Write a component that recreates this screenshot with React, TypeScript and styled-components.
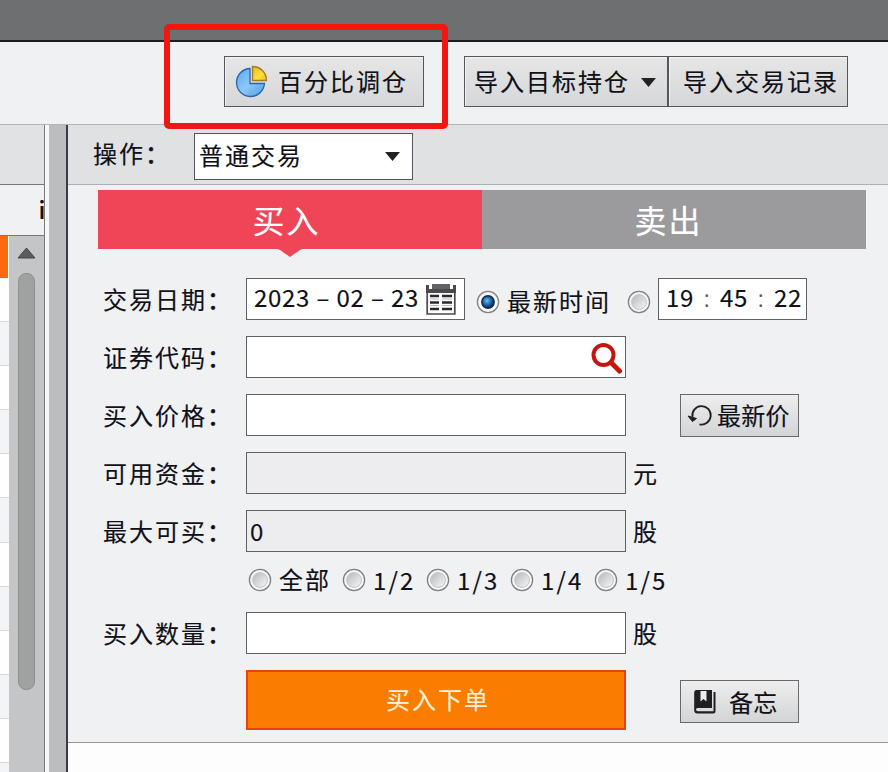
import React from 'react';
import styled, { createGlobalStyle } from 'styled-components';

const GlobalStyle = createGlobalStyle`
  * { box-sizing: border-box; }
  body { margin: 0; overflow: hidden; background: #f0f1f3; }
`;

const Screen = styled.div`
  position: relative;
  display: flex;
  flex-direction: column;
  width: 888px;
  height: 772px;
  overflow: hidden;
  background: #f0f1f3;
  color: #101018;
  font-family: 'Noto Sans CJK SC', sans-serif;
  font-size: 24px;
  line-height: 24px;
  letter-spacing: 2px;
  white-space: nowrap;
  -webkit-text-stroke: 0.15px currentColor;
`;

const TitleBar = styled.div`
  flex: none;
  height: 42px;
  background: #6e6f70;
  border-bottom: 2px solid #1d1d1f;
`;

const Toolbar = styled.div`
  flex: none;
  display: flex;
  height: 83px;
  padding: 14px 0 0 224px;
  border-bottom: 1px solid #b3b4b6;
`;

const ToolButton = styled.button<{ $width: number; $pad: number; $gap?: number }>`
  display: flex;
  align-items: center;
  width: ${p => p.$width}px;
  height: 51px;
  margin: 0 ${p => p.$gap ?? 0}px 0 0;
  padding: 0 0 2px ${p => p.$pad}px;
  border: 1.5px solid #55555c;
  box-shadow: inset 1px 1px 0 #f3f3f4;
  background: linear-gradient(#e6e6e7, #d6d7d8);
  color: inherit;
  font: inherit;
  letter-spacing: inherit;
  & > svg { flex: none; }
`;

const Caption = styled.span<{ $left?: number }>`
  margin-left: ${p => p.$left ?? 0}px;
`;

const CaretBox = styled.span`
  display: flex;
  margin-left: 11px;
  padding-top: 3px;
`;

const Body = styled.div`
  flex: 1;
  display: flex;
  min-height: 0;
`;

const SidePane = styled.div`
  flex: none;
  display: flex;
  flex-direction: column;
  width: 45px;
  border-right: 1px solid #77787a;
`;

const SideTop = styled.div`
  flex: none;
  height: 60px;
  background: #e1e2e3;
  border-bottom: 1px solid #77787a;
`;

const SideHeader = styled.div`
  flex: none;
  display: flex;
  align-items: center;
  justify-content: flex-end;
  height: 51px;
  padding-bottom: 3px;
  font-weight: 500;
  letter-spacing: -1.5px;
  border-bottom: 1px solid #77787a;
`;

const SideList = styled.div`
  flex: 1;
  display: flex;
  min-height: 0;
`;

const Rows = styled.div`
  width: 9px;
  overflow: hidden;
  background: #fff;
`;

const ListRow = styled.div<{ $active?: boolean; $odd?: boolean }>`
  width: ${p => (p.$active ? 8 : 9)}px;
  height: ${p => (p.$active ? 42 : 44.1)}px;
  background: ${p => (p.$active ? '#fb6a0c' : p.$odd ? '#fefefe' : '#f3f4f7')};
  border-bottom: 1px solid ${p => (p.$active ? '#c9733c' : '#d8d9dc')};
`;

const ScrollTrack = styled.div`
  flex: 1;
  display: flex;
  flex-direction: column;
  align-items: center;
  padding: 11px 0 0 0;
  background: #c4c5c6;
`;

const Thumb = styled.div`
  width: 17px;
  height: 417px;
  margin-top: 14px;
  border: 1px solid #8e8f90;
  border-radius: 8px;
  background: #a0a1a1;
`;

const Splitter = styled.div`
  flex: none;
  width: 23px;
  border-left: 4px solid #f8f8f9;
  border-right: 2px solid #3b3b46;
  background: #bcbdbe;
`;

const Main = styled.div`
  flex: 1;
  display: flex;
  flex-direction: column;
  background: #fdfdfe;
`;

const ActionBar = styled.div`
  flex: none;
  display: flex;
  height: 60px;
  padding: 8px 0 0 25px;
  background: #e0e1e3;
  border-bottom: 1px solid #a9b0b5;
`;

const ActionLabel = styled.span`
  width: 101px;
  padding-top: 8px;
`;

const Select = styled.div`
  display: flex;
  align-items: center;
  width: 219px;
  height: 47px;
  padding: 0 12px 0 4px;
  justify-content: space-between;
  border: 1.5px solid #55555c;
  background: #fff;
`;

const SelectValue = styled.span`
  padding-bottom: 3px;
`;

const Panel = styled.div`
  flex: none;
  height: 558px;
  padding-top: 5px;
  border-bottom: 1.5px solid #96979a;
  background: #f0f1f3;
`;

const Tabs = styled.div`
  display: flex;
  width: 768px;
  height: 59px;
  margin-left: 30px;
`;

const Tab = styled.div<{ $active?: boolean }>`
  position: relative;
  flex: none;
  width: 384px;
  display: flex;
  align-items: center;
  justify-content: center;
  padding: 0 ${p => (p.$active ? 7 : 11)}px 1px 0;
  background: ${p => (p.$active ? '#f04556' : '#9b9b9d')};
  color: #fff;
  font-size: 32px;
  line-height: 36px;
`;

const TabPointer = styled.svg`
  position: absolute;
  left: 177px;
  top: 58px;
`;

const Form = styled.div`
  display: flex;
  flex-direction: column;
  gap: 16px;
  padding: 29px 0 0 35px;
`;

const FormRow = styled.div<{ $height?: number }>`
  display: flex;
  align-items: center;
  height: ${p => p.$height ?? 42}px;
`;

const Label = styled.span`
  flex: none;
  width: 143px;
`;

const Colon = styled.span`
  -webkit-text-stroke: 0.6px currentColor;
`;

const Field = styled.div<{ $width?: number; $locked?: boolean }>`
  flex: none;
  display: flex;
  align-items: center;
  width: ${p => p.$width ?? 380}px;
  height: 42px;
  border: 1.5px solid #606067;
  background: ${p => (p.$locked ? '#ededef' : '#fff')};
`;

const FieldIcon = styled.span<{ $right?: number }>`
  display: flex;
  margin-left: auto;
  padding-right: ${p => p.$right ?? 2}px;
`;

const Digits = styled.span<{ $left?: number }>`
  margin-left: ${p => p.$left ?? 0}px;
  letter-spacing: 0.68px;
`;

const Slash = styled.span`
  display: inline-block;
  width: 13px;
  text-align: center;
`;

const DateText = styled.span`
  display: flex;
  padding: 0 0 5px 7px;
  letter-spacing: 0.68px;
`;

const Separator = styled.span<{ $faint?: boolean }>`
  width: ${p => (p.$faint ? 26 : 26.5)}px;
  text-align: center;
  color: ${p => (p.$faint ? '#55555c' : 'inherit')};
  font-weight: ${p => (p.$faint ? 300 : 400)};
`;

const Unit = styled.span`
  margin-left: 7px;
  width: 47px;
`;

const SmallButton = styled.button<{ $left: number; $pad: number; $top?: number }>`
  display: flex;
  align-items: center;
  width: 119px;
  height: 43px;
  margin: ${p => p.$top ?? 0}px 0 0 ${p => p.$left}px;
  padding: 0 0 0 ${p => p.$pad}px;
  border: 1px solid #68686d;
  background: linear-gradient(#eeeeef, #d3d4d5);
  color: inherit;
  font: inherit;
  letter-spacing: 0.2px;
`;

const Quantities = styled.div`
  display: flex;
  align-items: center;
  height: 28px;
  margin: 0 0 0 145px;
  padding-bottom: 4px;
`;

const QuantityOption = styled.span<{ $width: number }>`
  display: flex;
  align-items: center;
  gap: 7px;
  width: ${p => p.$width}px;
`;

const RadioOption = styled.span<{ $left: number; $width: number }>`
  display: flex;
  align-items: center;
  gap: 7px;
  width: ${p => p.$width}px;
  margin: 5px 0 0 ${p => p.$left}px;
`;

const RadioText = styled.span`
  padding-bottom: 2px;
`;

const SubmitButton = styled.button`
  width: 380px;
  height: 60px;
  margin-left: 143px;
  padding: 0 0 2px 4px;
  border: 2px solid #e8430c;
  background: #fa7c00;
  color: #fff1d8;
  font: inherit;
  letter-spacing: inherit;
`;

const Annotation = styled.div`
  position: absolute;
  left: 164px;
  top: 24px;
  width: 284px;
  height: 105px;
  border: 6px solid #f21510;
  border-radius: 5px;
`;

const Radio = ({ checked }: { checked?: boolean }) => (
  <svg width="24" height="24" viewBox="0 0 24 24">
    <defs>
      <linearGradient id="dish" x1="0" y1="0" x2="1" y2="1">
        <stop offset="0" stopColor="#b4b8bc" />
        <stop offset="1" stopColor="#f7f8f8" />
      </linearGradient>
      <radialGradient id="bead" cx="0.42" cy="0.4" r="0.6">
        <stop offset="0" stopColor="#6cc4ee" />
        <stop offset="0.45" stopColor="#1f78b8" />
        <stop offset="1" stopColor="#0b2450" />
      </radialGradient>
    </defs>
    <circle cx="12" cy="12" r="10.6" fill="#f6f6f7" stroke="#7f8184" strokeWidth="1.3" />
    {checked ? (
      <circle cx="12" cy="12" r="6.2" fill="url(#bead)" stroke="#14284a" strokeWidth="1.4" />
    ) : (
      <circle cx="12" cy="12" r="7.4" fill="url(#dish)" stroke="#c3c6c9" strokeWidth="1" />
    )}
  </svg>
);

const PieIcon = () => (
  <svg width="34" height="34" viewBox="0 0 34 34">
    <defs>
      <linearGradient id="blue" x1="0" y1="0" x2="1" y2="1">
        <stop offset="0" stopColor="#5aa9ea" />
        <stop offset="0.5" stopColor="#8cc8f8" />
        <stop offset="1" stopColor="#4c9ce4" />
      </linearGradient>
      <linearGradient id="gold" x1="0" y1="0" x2="1" y2="1">
        <stop offset="0" stopColor="#eeb42c" />
        <stop offset="0.6" stopColor="#ffe136" />
        <stop offset="1" stopColor="#f0b52a" />
      </linearGradient>
    </defs>
    <path d="M15 4.500A14 14 0 1 0 29.500 19.500H15Z" fill="url(#blue)" stroke="#2c64a4" strokeWidth="1.3" />
    <path d="M17.500 2.500A14 14 0 0 1 31.500 16.500H17.500Z" fill="url(#gold)" stroke="#a87a26" strokeWidth="1.4" />
  </svg>
);

const Caret = () => (
  <svg width="15" height="9" viewBox="0 0 15 9">
    <path d="M0 0H15L7.5 9Z" fill="#222226" />
  </svg>
);

const ScrollUp = () => (
  <svg width="19" height="12" viewBox="0 0 19 12">
    <path d="M9.5 1L18 11H1Z" fill="#5b5c5d" stroke="#454647" strokeWidth="1" />
  </svg>
);

const CalendarIcon = () => (
  <svg width="32" height="33" viewBox="0 0 32 33">
    <path d="M2.200 8V31H29.800V8" fill="#fff" stroke="#4b4b4f" strokeWidth="1.700" />
    <path d="M1 2H4V6H7V1H25V6H28V2H31V10H1Z" fill="#4a4a4d" />
    <path d="M7 1H25V6H7Z" fill="#626264" />
    <path d="M5 13H14M5 19.500H14M5 26H14M17 13H27M17 19.500H27M17 26H27" stroke="#29292d" strokeWidth="2.600" />
    <path d="M5 16H14M17 16H27M5 22.500H14M17 22.500H27" stroke="#b5b5b8" strokeWidth="1" />
  </svg>
);

const SearchIcon = () => (
  <svg width="33" height="33" viewBox="0 0 33 33">
    <circle cx="13.500" cy="14" r="10" fill="none" stroke="#c4160f" strokeWidth="4" />
    <path d="M21 21.500L29.500 30" stroke="#c4160f" strokeWidth="5" strokeLinecap="round" />
  </svg>
);

const ResetIcon = () => (
  <svg width="26" height="26" viewBox="0 0 26 26">
    <path d="M5.500 15A9.200 9.200 0 1 1 12.500 22.300" fill="none" stroke="#1e1e24" strokeWidth="1.800" />
    <path d="M1 14L9.500 16.500L5.500 19.500Z" fill="#1e1e24" stroke="#1e1e24" />
  </svg>
);

const NotebookIcon = () => (
  <svg width="24" height="26" viewBox="0 0 24 26">
    <path d="M3.500 1H19V19H4.500Q3 19 3 20.500T5 22.300H20.500V3H22.500V22Q22.500 24.500 20 24.500H4.500Q1.200 24.500 1.200 21V4Q1.200 1 3.500 1Z" fill="#1f1f22" />
    <path d="M7.500 2H13.500V12.500L10.500 10L7.500 12.500Z" fill="#ececed" />
  </svg>
);

const FieldLabel = ({ text }: { text: string }) => (
  <Label>{text}<Colon>：</Colon></Label>
);

export default function App() {
  return (
    <Screen>
      <GlobalStyle />
      <TitleBar />
      <Toolbar>
        <ToolButton $width={200} $pad={10} $gap={40}>
          <PieIcon />
          <Caption $left={9}>百分比调仓</Caption>
        </ToolButton>
        <ToolButton $width={204} $pad={9}>
          导入目标持仓
          <CaretBox><Caret /></CaretBox>
        </ToolButton>
        <ToolButton $width={180} $pad={14}>导入交易记录</ToolButton>
      </Toolbar>
      <Body>
        <SidePane>
          <SideTop />
          <SideHeader>i</SideHeader>
          <SideList>
            <Rows>
              <ListRow $active />
              {Array.from({ length: 12 }, (_, i) => <ListRow key={i} $odd={i % 2 === 0} />)}
            </Rows>
            <ScrollTrack>
              <ScrollUp />
              <Thumb />
            </ScrollTrack>
          </SideList>
        </SidePane>
        <Splitter />
        <Main>
          <ActionBar>
            <ActionLabel>操作<Colon>：</Colon></ActionLabel>
            <Select><SelectValue>普通交易</SelectValue><Caret /></Select>
          </ActionBar>
          <Panel>
            <Tabs>
              <Tab $active>
                买入
                <TabPointer width="30" height="9" viewBox="0 0 30 9">
                  <path d="M0 0H30L25 2L15 9L5 2Z" fill="#f04556" />
                </TabPointer>
              </Tab>
              <Tab>卖出</Tab>
            </Tabs>
            <Form>
              <FormRow>
                <FieldLabel text="交易日期" />
                <Field $width={219}>
                  <DateText>
                    2023<Separator>–</Separator>02<Separator>–</Separator>23
                  </DateText>
                  <FieldIcon $right={7}><CalendarIcon /></FieldIcon>
                </Field>
                <RadioOption $left={11} $width={151}>
                  <Radio checked /><RadioText>最新时间</RadioText>
                </RadioOption>
                <RadioOption $left={0} $width={31}><Radio /></RadioOption>
                <Field $width={149}>
                  <DateText>
                    19<Separator $faint>:</Separator>45<Separator $faint>:</Separator>22
                  </DateText>
                </Field>
              </FormRow>
              <FormRow>
                <FieldLabel text="证券代码" />
                <Field><FieldIcon><SearchIcon /></FieldIcon></Field>
              </FormRow>
              <FormRow>
                <FieldLabel text="买入价格" />
                <Field />
                <SmallButton $left={54} $pad={6}>
                  <ResetIcon />
                  <Caption $left={4}>最新价</Caption>
                </SmallButton>
              </FormRow>
              <FormRow>
                <FieldLabel text="可用资金" />
                <Field $locked />
                <Unit>元</Unit>
              </FormRow>
              <FormRow>
                <FieldLabel text="最大可买" />
                <Field $locked><Digits $left={3}>0</Digits></Field>
                <Unit>股</Unit>
              </FormRow>
              <Quantities>
                <QuantityOption $width={94}><Radio /><RadioText>全部</RadioText></QuantityOption>
                {[2, 3, 4, 5].map(n => (
                  <QuantityOption key={n} $width={84}>
                    <Radio /><Digits>1<Slash>/</Slash>{n}</Digits>
                  </QuantityOption>
                ))}
              </Quantities>
              <FormRow>
                <FieldLabel text="买入数量" />
                <Field />
                <Unit>股</Unit>
              </FormRow>
              <FormRow $height={60}>
                <SubmitButton>买入下单</SubmitButton>
                <SmallButton $left={54} $pad={12} $top={3}>
                  <NotebookIcon />
                  <Caption $left={12}>备忘</Caption>
                </SmallButton>
              </FormRow>
            </Form>
          </Panel>
        </Main>
      </Body>
      <Annotation />
    </Screen>
  );
}
